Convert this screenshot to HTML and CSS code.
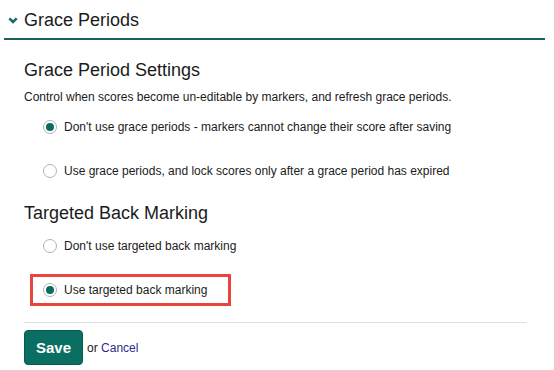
FILE: index.html
```html
<!DOCTYPE html>
<html>
<head>
  <title>Grace Periods</title>
  <link rel="stylesheet" href="styles.css">
</head>
<body>
  <div class="panel-header">
    <svg class="chevron" width="10" height="7" viewBox="0 0 10 7">
      <polyline points="1.3,1.3 5,5 8.7,1.3" fill="none" stroke="#1d6a62" stroke-width="2.6"/>
    </svg>
    <span>Grace Periods</span>
  </div>

  <div class="panel-body">
    <h2>Grace Period Settings</h2>
    <p class="hint">Control when scores become un-editable by markers, and refresh grace periods.</p>

    <label class="option">
      <input type="radio" name="grace" checked>
      <span>Don't use grace periods - markers cannot change their score after saving</span>
    </label>
    <label class="option">
      <input type="radio" name="grace">
      <span>Use grace periods, and lock scores only after a grace period has expired</span>
    </label>

    <h2 class="second">Targeted Back Marking</h2>

    <label class="option">
      <input type="radio" name="backmark">
      <span>Don't use targeted back marking</span>
    </label>
    <label class="option highlight">
      <input type="radio" name="backmark" checked>
      <span>Use targeted back marking</span>
    </label>

    <div class="actions">
      <button class="save">Save</button>
      <span class="or">or <a href="#">Cancel</a></span>
    </div>
  </div>
</body>
</html>
```

FILE: styles.css
```css
body {
  margin: 0;
  font-family: "Liberation Sans", Arial, sans-serif;
  color: #1b1b1b;
  background: #fff;
}

.panel-header {
  display: flex;
  align-items: center;
  margin: 0 9px 0 4px;
  padding: 9px 0 7px 4px;
  border-bottom: 2px solid #1d5f59;
  font-size: 18px;
  line-height: 22px;
}

.chevron {
  margin-right: 6px;
  margin-top: 1px;
}

.panel-body {
  padding: 0 27px 0 24px;
}

h2 {
  margin: 19px 0 0;
  font-size: 18px;
  font-weight: normal;
  line-height: 22px;
}

h2.second {
  margin: 15px 0 6px;
}

.hint {
  margin: 8px 0 6px;
  font-size: 12px;
  line-height: 16px;
}

.option {
  display: flex;
  width: fit-content;
  align-items: center;
  margin: 0 0 12px 6px;
  padding: 5px 21px 5px 10px;
  border: 3px solid transparent;
  font-size: 12px;
  line-height: 16px;
}

.option.highlight {
  border-color: #e8453f;
  margin-bottom: 16px;
}

.option input {
  appearance: none;
  box-sizing: border-box;
  width: 14px;
  height: 14px;
  margin: 0 7px 0 0;
  border: 1px solid #b3b3b3;
  border-radius: 50%;
  background: #fff;
  display: grid;
  place-content: center;
}

.option input:checked::before {
  content: "";
  width: 8px;
  height: 8px;
  border-radius: 50%;
  background: #0a6b60;
}

.actions {
  display: flex;
  align-items: center;
  border-top: 1px solid #dedede;
  padding-top: 7px;
}

.save {
  height: 35px;
  padding: 0 11px;
  background-color: #0b6e63;
  color: #fff;
  border: 1px solid #075a51;
  border-radius: 4px;
  font-family: inherit;
  font-size: 15px;
  font-weight: bold;
  cursor: pointer;
}

.or {
  margin-left: 4px;
  font-size: 12px;
}

.or a {
  color: #2e2a8c;
  text-decoration: none;
}
```
